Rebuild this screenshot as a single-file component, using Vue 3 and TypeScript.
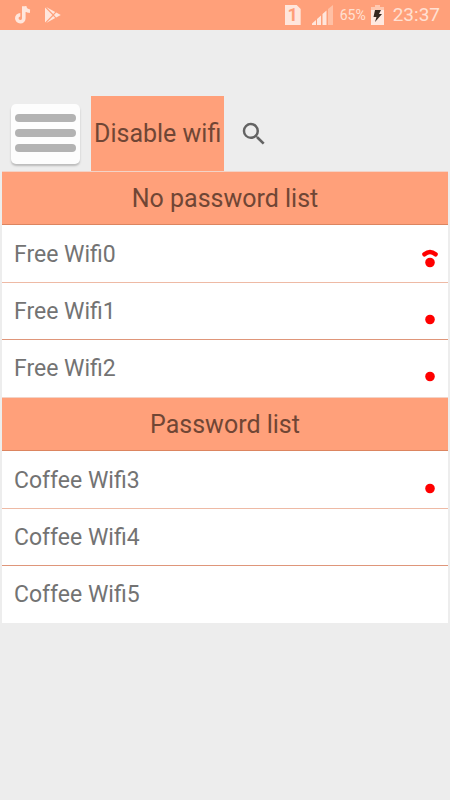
<script setup lang="ts">
interface Network {
  name: string
  signal: 'none' | 'weak' | 'fair'
}

interface NetworkGroup {
  id: string
  title: string
  networks: Network[]
}

const groups: NetworkGroup[] = [
  {
    id: 'open',
    title: 'No password list',
    networks: [
      { name: 'Free Wifi0', signal: 'fair' },
      { name: 'Free Wifi1', signal: 'weak' },
      { name: 'Free Wifi2', signal: 'weak' },
    ],
  },
  {
    id: 'secured',
    title: 'Password list',
    networks: [
      { name: 'Coffee Wifi3', signal: 'weak' },
      { name: 'Coffee Wifi4', signal: 'none' },
      { name: 'Coffee Wifi5', signal: 'none' },
    ],
  },
]
</script>

<template>
  <div class="screen">
    <header class="status">
      <div class="status-group apps">
        <svg width="16" height="18" viewBox="0 0 16 18" aria-hidden="true">
          <path d="M8.8 0.2V12.2A3.500 3.500 0 1 1 5.3 8.8M9.6 0.2C10 3.2 12 5 15 5.2" fill="none" stroke="#ffe6dc" stroke-width="3.600" />
        </svg>
        <svg width="16" height="16" viewBox="0 0 16 16" aria-hidden="true">
          <path d="M0 0.5V15.5L7.4 8Z M1.2 0L8.2 7.1L10.2 5.1Z M1.2 16L8.2 8.9L10.2 10.9Z M11.2 5.5L9 8L11.2 10.5L15.8 8Z" fill="#ffe6dc" />
        </svg>
      </div>
      <div class="status-group">
        <span class="sim">1</span>
        <svg class="signal" width="21" height="20" viewBox="0 0 21 20" aria-hidden="true">
          <path d="M16 4L21 0V20H16Z" fill="#ffc0a5" />
          <path d="M0 20V18.500L4 15V20Z M5 20V14L9 10.500V20Z M10.500 20V9L14.500 5.500V20Z" fill="#ffe6dc" />
        </svg>
        <span class="percent">65%</span>
        <svg class="battery" width="13" height="20" viewBox="0 0 13 20" aria-hidden="true">
          <path d="M4 0H9V2H13V6H0V2H4Z" fill="#ffc8b0" />
          <path d="M0 5H13V20H0Z" fill="#ffe9e0" />
          <path d="M4 5H10L8 9H11L4 17L5.500 12H2.500Z" fill="#352820" />
        </svg>
        <time class="clock">23:37</time>
      </div>
    </header>

    <main class="content">
      <div class="toolbar">
        <button class="menu" type="button" aria-label="Menu">
          <span class="bar"></span>
          <span class="bar"></span>
          <span class="bar"></span>
        </button>
        <button class="toggle" type="button">Disable wifi</button>
        <button class="search" type="button" aria-label="Search">
          <svg width="30" height="30" viewBox="0 0 24 24" aria-hidden="true">
            <path d="M15.500 14h-.79l-.28-.27A6.471 6.471 0 0 0 16 9.500 6.500 6.500 0 1 0 9.500 16c1.610 0 3.090-.59 4.230-1.570l.27.28v.79l5 4.990L20.490 19l-4.990-5zm-6 0C7.010 14 5 11.990 5 9.500S7.010 5 9.500 5 14 7.010 14 9.500 11.990 14 9.500 14z" fill="#636363" />
          </svg>
        </button>
      </div>

      <section v-for="group in groups" :key="group.id" class="group">
        <h2 class="title">{{ group.title }}</h2>
        <ul class="list">
          <li v-for="network in group.networks" :key="network.name" class="row">
            <span>{{ network.name }}</span>
            <svg v-if="network.signal !== 'none'" width="18" height="26" viewBox="0 0 18 26" aria-hidden="true">
              <circle cx="9" cy="20.500" r="4.800" fill="#f00" />
              <path v-if="network.signal === 'fair'" d="M3.500 12.200Q9 7.800 14.500 12.200" fill="none" stroke="#f00" stroke-width="4.600" stroke-linecap="round" />
            </svg>
          </li>
        </ul>
      </section>
    </main>
  </div>
</template>

<style>
body {
  background: #ededed;
}
</style>

<style scoped>
.screen {
  min-height: 100vh;
  background: #ededed;
  font-family: Roboto, "Liberation Sans", sans-serif;
}

.status {
  display: flex;
  align-items: center;
  justify-content: space-between;
  height: 30px;
  padding: 0 10px 0 15px;
  background: #ffa07a;
  color: #ffe0d3;
}

.status-group {
  display: flex;
  align-items: center;
}

.apps {
  gap: 14px;
}

.sim {
  width: 16px;
  margin-right: 11px;
  background: #ffe6dc;
  clip-path: polygon(0 0, 75% 0, 100% 20%, 100% 100%, 0 100%);
  color: #ff9e78;
  font-size: 18px;
  font-weight: 700;
  line-height: 20px;
  text-align: center;
}

.signal {
  margin-right: 7px;
}

.percent {
  margin-right: 5px;
  font-size: 14px;
  line-height: 20px;
}

.battery {
  margin-right: 9px;
}

.clock {
  font-size: 19px;
  line-height: 30px;
}

.content {
  padding: 66px 2px 0;
}

.toolbar {
  display: flex;
  align-items: center;
  height: 75px;
  padding-left: 9px;
}

button {
  margin: 0;
  padding: 0;
  border: 0;
  font-family: inherit;
  cursor: pointer;
}

.menu {
  display: flex;
  flex-direction: column;
  align-items: center;
  justify-content: center;
  gap: 7px;
  box-sizing: border-box;
  width: 69px;
  height: 60px;
  padding-bottom: 2px;
  margin-right: 11px;
  border-radius: 5px;
  background: #fdfdfd;
  box-shadow: 0 2px 2px #bcbcbc;
}

.bar {
  width: 61px;
  height: 8px;
  border-radius: 4px;
  background: #b3b3b3;
}

.toggle {
  align-self: stretch;
  padding: 0 3px;
  background: #ffa07a;
  color: #704635;
  font-size: 25px;
  line-height: 30px;
}

.search {
  display: flex;
  margin-left: 15px;
  background: transparent;
}

.group {
  padding-bottom: 1px;
  background: #fff;
}

.title {
  box-sizing: border-box;
  height: 54px;
  margin: 0;
  border-top: 1px solid #f3d3c7;
  border-bottom: 1px solid #dc8560;
  background: #ffa07a;
  color: #704635;
  font-size: 25px;
  font-weight: 400;
  line-height: 54px;
  text-align: center;
}

.list {
  margin: 0;
  padding: 0;
  list-style: none;
}

.row {
  display: flex;
  align-items: center;
  justify-content: space-between;
  box-sizing: border-box;
  height: 57px;
  padding: 2px 9px 0 12px;
  color: #737373;
  font-size: 23px;
  line-height: 30px;
}

.row + .row {
  border-top: 1px solid #eebaa5;
}

.row:nth-child(3) {
  border-top-color: #df967a;
}
</style>
